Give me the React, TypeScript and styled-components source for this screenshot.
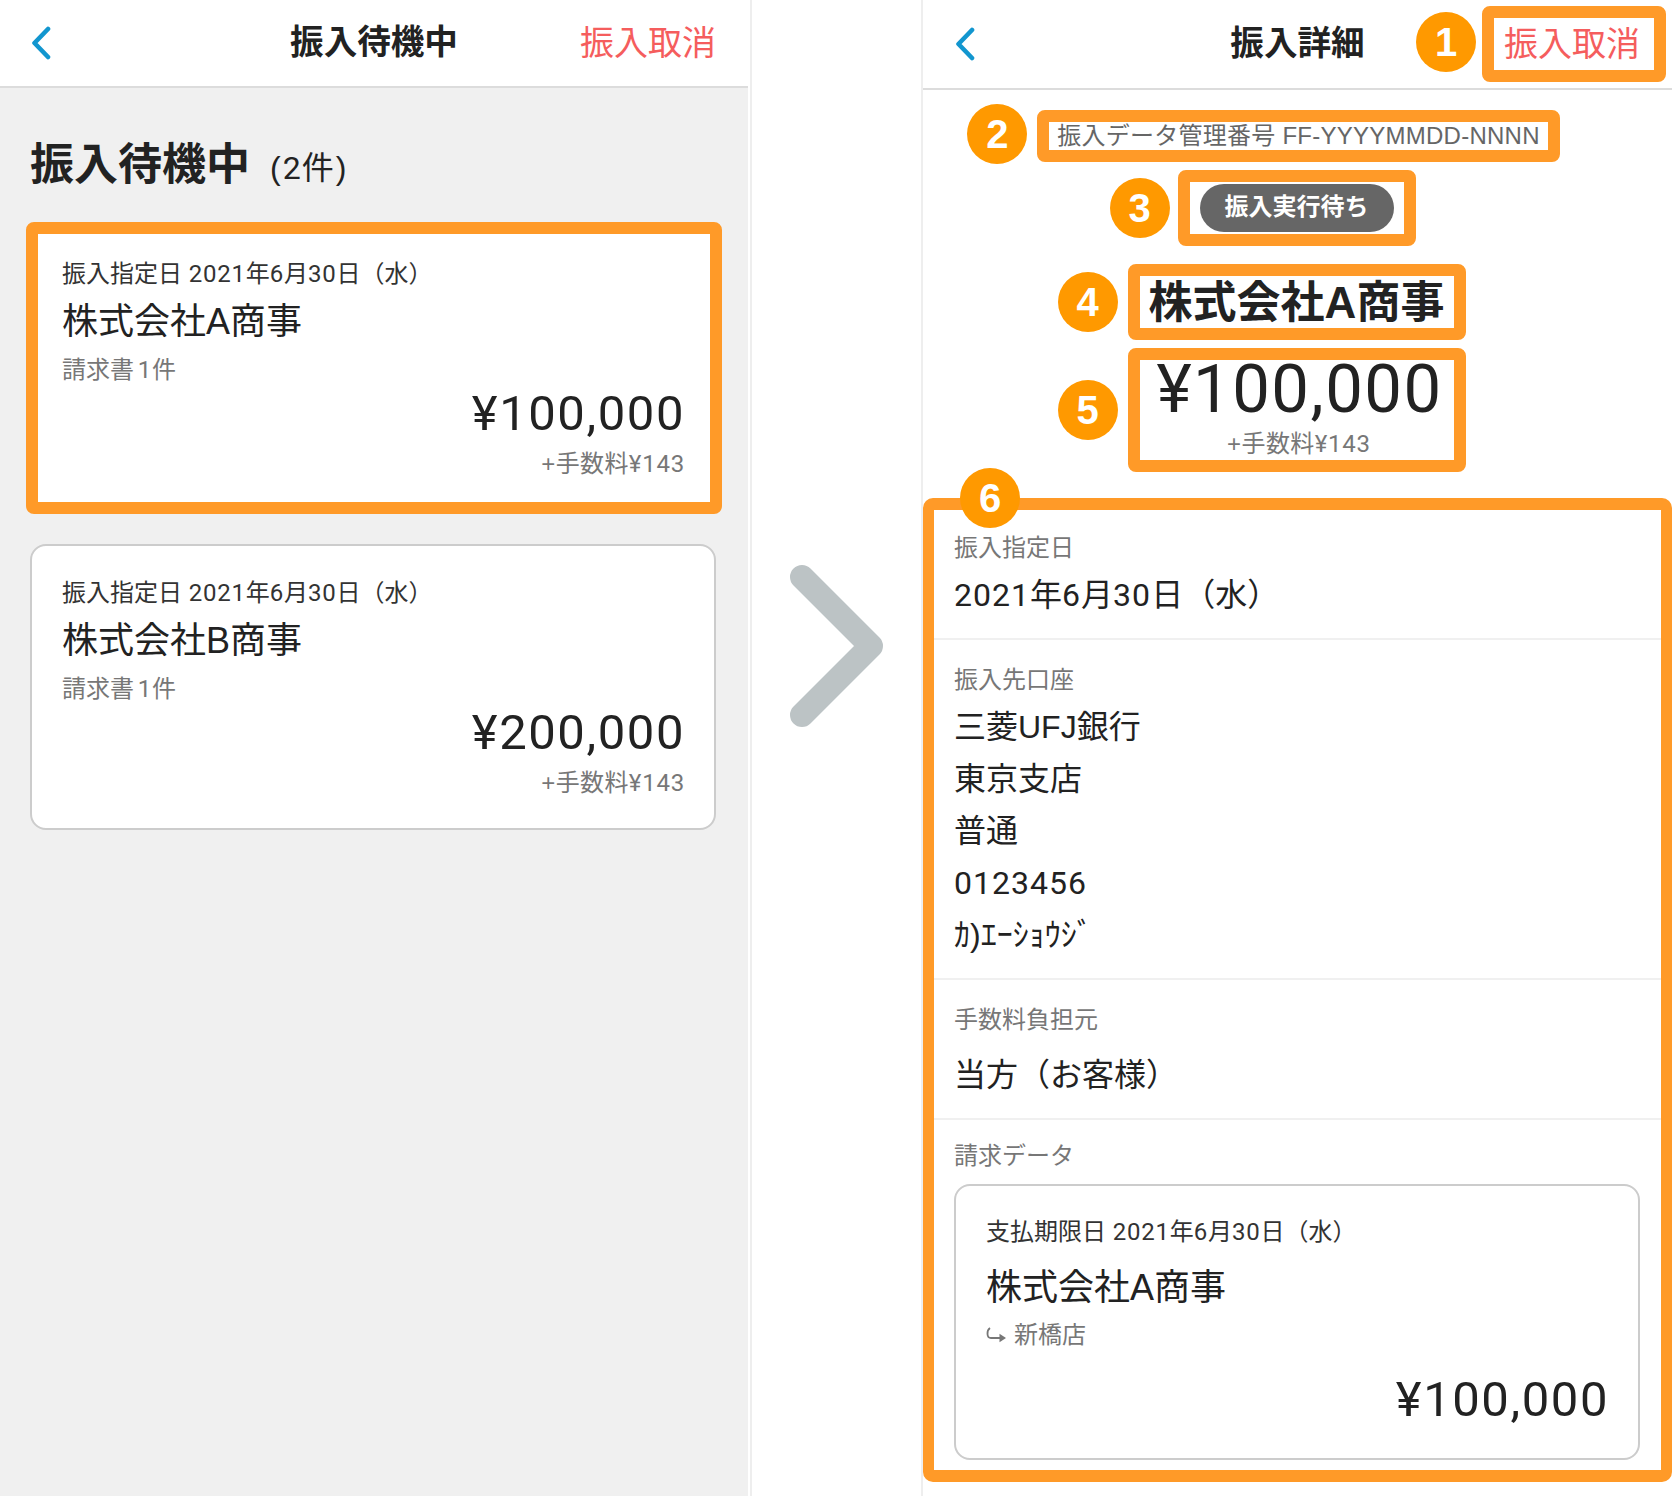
import React from 'react';
import styled, { createGlobalStyle } from 'styled-components';

const ORANGE = '#ff9a28';

const GlobalStyle = createGlobalStyle`
  html, body {
    margin: 0;
    padding: 0;
    background: #fff;
  }
  body {
    font-family: 'Liberation Sans', 'Noto Sans CJK JP', sans-serif;
    color: #222;
  }
  * {
    box-sizing: border-box;
  }
`;

const Page = styled.div`
  display: flex;
  width: 1672px;
  height: 1496px;
  overflow: hidden;
  background: #fff;
`;

const LeftPanel = styled.section`
  width: 748px;
  flex: none;
  margin-right: 2px;
  background: #f0f0f0;
`;

const Gutter = styled.div`
  width: 173px;
  flex: none;
  padding: 565px 0 0 38px;
  border-left: 2px solid #eeeeee;
  border-right: 2px solid #eeeeee;
`;

const RightPanel = styled.section`
  flex: 1;
  min-width: 0;
  background: #fff;
`;

const Header = styled.header<{ $height: number }>`
  display: grid;
  grid-template-columns: 1fr auto 1fr;
  align-items: center;
  height: ${props => props.$height}px;
  background: #fff;
  border-bottom: 2px solid #dcdcdc;
`;

const BackButton = styled.div<{ $left: number }>`
  display: flex;
  padding-left: ${props => props.$left}px;
`;

const HeaderTitle = styled.h1`
  margin: 0;
  font-size: 33.6px;
  line-height: 44px;
  font-weight: 700;
  color: #222;
`;

const CancelText = styled.div`
  font-size: 34px;
  line-height: 44px;
  color: #f55d5d;
  white-space: nowrap;
`;

const HeaderRight = styled.div<{ $right: number }>`
  display: flex;
  justify-content: flex-end;
  padding-right: ${props => props.$right}px;
`;

const ListBody = styled.div`
  padding: 47px 32px 0 30px;
`;

const ListHeading = styled.div`
  display: flex;
  align-items: baseline;
  gap: 20px;
  height: 90px;
`;

const HeadingText = styled.h2`
  margin: 0;
  font-size: 44px;
  line-height: 60px;
  font-weight: 700;
`;

const HeadingCount = styled.span`
  position: relative;
  top: -1px;
  font-size: 32px;
  line-height: 60px;
  letter-spacing: 2px;
`;

const CardList = styled.div`
  display: flex;
  flex-direction: column;
  gap: 32.5px;
`;

const Card = styled.article<{ $selected?: boolean; $height: number; $top: number }>`
  position: relative;
  height: ${props => props.$height}px;
  padding: ${props => props.$top}px 29px 0 30px;
  background: #fff;
  border: 2px solid #cccccc;
  border-radius: 16px;

  ${props => props.$selected && `
    &::after {
      content: '';
      position: absolute;
      top: -5px;
      left: -6px;
      right: -8px;
      bottom: -5px;
      border: 12px solid ${ORANGE};
      border-radius: 8px;
    }
  `}
`;

const CardDate = styled.div`
  font-size: 24px;
  line-height: 32px;
  color: #333;
`;

const CardName = styled.div<{ $gap: number }>`
  margin-top: ${props => props.$gap}px;
  font-size: 36px;
  line-height: 44px;
  color: #222;
`;

const CardSub = styled.div<{ $gap: number }>`
  display: flex;
  align-items: center;
  gap: 8px;
  margin-top: ${props => props.$gap}px;
  font-size: 24px;
  line-height: 32px;
  word-spacing: -3px;
  color: #777;
`;

const Num = styled.span`
  font-family: 'Roboto', 'Liberation Sans', sans-serif;
  letter-spacing: 0.032em;
`;

const CardAmount = styled.div<{ $gap: number }>`
  margin-top: ${props => props.$gap}px;
  font-size: 49px;
  line-height: 60px;
  text-align: right;
  color: #222;
`;

const CardFee = styled.div`
  margin-top: 4px;
  font-size: 24px;
  line-height: 32px;
  letter-spacing: 0.4px;
  text-align: right;
  color: #777;
`;

const SummaryColumn = styled.div`
  display: flex;
  flex-direction: column;
  align-items: center;
  padding: 20px 2px 0 0;
`;

const Highlight = styled.div<{ $gap?: number; $width?: number; $shift?: number }>`
  position: relative;
  margin-top: ${props => props.$gap ?? 0}px;
  margin-left: ${props => props.$shift ?? 0}px;
  width: ${props => (props.$width ? `${props.$width}px` : 'auto')};
  border: 12px solid ${ORANGE};
  border-radius: 8px;
  background: #fff;
  text-align: center;
`;

const Badge = styled.span<{ $offset?: number; $lift?: number }>`
  position: absolute;
  right: calc(100% + ${props => props.$offset ?? 22}px);
  top: calc(50% - ${props => props.$lift ?? 0}px);
  display: flex;
  align-items: center;
  justify-content: center;
  width: 60px;
  height: 60px;
  transform: translateY(-50%);
  border-radius: 50%;
  background: #ff9900;
  color: #fff;
  font-size: 40px;
  font-weight: 700;
  line-height: 1;
`;

const SectionBadge = styled(Badge)`
  right: auto;
  left: 26px;
  top: -42px;
  transform: none;
`;

const CancelHighlight = styled(Highlight)`
  padding: 0 14px 0 10px;
  height: 76px;
  display: flex;
  align-items: center;
`;

const ManageNumber = styled.div`
  padding: 0 8px;
  font-size: 24px;
  line-height: 28px;
  letter-spacing: 0.25px;
  color: #666;
  white-space: nowrap;
`;

const StatusPill = styled.div`
  margin: 2px 10px;
  padding: 0 25px;
  height: 48px;
  border-radius: 24px;
  background: #666;
  color: #fff;
  font-size: 24px;
  line-height: 46px;
  font-weight: 700;
  white-space: nowrap;
`;

const CompanyName = styled.div`
  padding-top: 1px;
  font-size: 44px;
  line-height: 51px;
  font-weight: 700;
  white-space: nowrap;
`;

const BigAmount = styled.div`
  font-size: 67px;
  line-height: 54px;
  padding: 2px 0 0 6px;

  ${Num} {
    letter-spacing: 0.022em;
  }
`;

const BigFee = styled.div`
  margin-top: 12px;
  padding-left: 5px;
  font-size: 24px;
  line-height: 31px;
  letter-spacing: 0.4px;
  color: #777;
`;

const DetailBox = styled.div`
  position: relative;
  margin-top: 26px;
  height: 984px;
  border-style: solid;
  border-color: ${ORANGE};
  border-width: 12px 11px;
  border-radius: 10px;
`;

const DetailRow = styled.div<{ $top: number; $bottom?: number }>`
  padding: ${props => props.$top}px 21px ${props => props.$bottom ?? 17}px 20px;
  border-bottom: 2px solid #f0f0f0;

  &:last-child {
    border-bottom: none;
  }
`;

const DetailLabel = styled.div`
  font-size: 24px;
  line-height: 32px;
  color: #777;
`;

const DetailValue = styled.div<{ $gap?: number }>`
  margin-top: ${props => props.$gap ?? 0}px;
  font-size: 32px;
  line-height: 52px;
  color: #222;
`;

const ValueList = styled.div`
  margin-top: 5px;
`;

const InvoiceCard = styled(Card)`
  margin-top: 12px;
`;

const BackIcon = () => (
  <svg width="20" height="34" viewBox="0 0 20 34" fill="none">
    <path d="M17 3 L3.5 17 L17 31" stroke="#1296cf" strokeWidth="4.6" strokeLinecap="round" strokeLinejoin="round" />
  </svg>
);

const BigChevron = () => (
  <svg width="94" height="162" viewBox="0 0 94 162" fill="none">
    <path d="M12 12 L81 81 L12 150" stroke="#bcc3c5" strokeWidth="24" strokeLinecap="round" strokeLinejoin="round" />
  </svg>
);

const BranchIcon = () => (
  <svg width="20" height="16" viewBox="0 0 20 16" fill="none">
    <path d="M4 1 C0.5 3.5 0.5 11 5 11 H14" stroke="#777" strokeWidth="1.8" />
    <polygon points="13.5,6.8 20,11 13.5,15.2" fill="#777" />
  </svg>
);

// digits in the reference run wider than the Latin letters, so they get their own span
const withNums = (text: string) =>
  text.split(/([¥0-9,]+)/).map((part, i) => (i % 2 === 1 ? <Num key={i}>{part}</Num> : part));

const pendingList = [
  { name: '株式会社A商事', amount: '¥100,000', selected: true },
  { name: '株式会社B商事', amount: '¥200,000', selected: false },
];

const bankLines = ['三菱UFJ銀行', '東京支店', '普通', '0123456', 'ｶ)ｴｰｼｮｳｼﾞ'];

const App: React.FC = () => {
  return (
    <Page>
      <GlobalStyle />
      <LeftPanel>
        <Header $height={88}>
          <BackButton $left={31}>
            <BackIcon />
          </BackButton>
          <HeaderTitle>振入待機中</HeaderTitle>
          <HeaderRight $right={32}>
            <CancelText>振入取消</CancelText>
          </HeaderRight>
        </Header>
        <ListBody>
          <ListHeading>
            <HeadingText>振入待機中</HeadingText>
            <HeadingCount>{withNums('(2件)')}</HeadingCount>
          </ListHeading>
          <CardList>
            {pendingList.map(item => (
              <Card key={item.name} $selected={item.selected} $height={286} $top={31}>
                <CardDate>{withNums('振入指定日 2021年6月30日（水）')}</CardDate>
                <CardName $gap={10}>{item.name}</CardName>
                <CardSub $gap={10}>
                  <span>{withNums('請求書 1件')}</span>
                </CardSub>
                <CardAmount $gap={-3}>{withNums(item.amount)}</CardAmount>
                <CardFee>{withNums('+手数料¥143')}</CardFee>
              </Card>
            ))}
          </CardList>
        </ListBody>
      </LeftPanel>

      <Gutter>
        <BigChevron />
      </Gutter>

      <RightPanel>
        <Header $height={90}>
          <BackButton $left={32}>
            <BackIcon />
          </BackButton>
          <HeaderTitle>振入詳細</HeaderTitle>
          <HeaderRight $right={6}>
            <CancelHighlight>
              <Badge $offset={18} $lift={2}>1</Badge>
              <CancelText>振入取消</CancelText>
            </CancelHighlight>
          </HeaderRight>
        </Header>

        <SummaryColumn>
          <Highlight $shift={4}>
            <Badge $lift={2}>2</Badge>
            <ManageNumber>振入データ管理番号 FF-YYYYMMDD-NNNN</ManageNumber>
          </Highlight>
          <Highlight $gap={8}>
            <Badge $offset={20}>3</Badge>
            <StatusPill>振入実行待ち</StatusPill>
          </Highlight>
          <Highlight $gap={18} $width={338}>
            <Badge>4</Badge>
            <CompanyName>株式会社A商事</CompanyName>
          </Highlight>
          <Highlight $gap={8} $width={338}>
            <Badge>5</Badge>
            <BigAmount>{withNums('¥100,000')}</BigAmount>
            <BigFee>{withNums('+手数料¥143')}</BigFee>
          </Highlight>
        </SummaryColumn>

        <DetailBox>
          <SectionBadge>6</SectionBadge>
          <DetailRow $top={22}>
            <DetailLabel>振入指定日</DetailLabel>
            <DetailValue $gap={5}>{withNums('2021年6月30日（水）')}</DetailValue>
          </DetailRow>
          <DetailRow $top={24}>
            <DetailLabel>振入先口座</DetailLabel>
            <ValueList>
              {bankLines.map(line => (
                <DetailValue key={line}>{withNums(line)}</DetailValue>
              ))}
            </ValueList>
          </DetailRow>
          <DetailRow $top={24}>
            <DetailLabel>手数料負担元</DetailLabel>
            <DetailValue $gap={13}>当方（お客様）</DetailValue>
          </DetailRow>
          <DetailRow $top={20} $bottom={0}>
            <DetailLabel>請求データ</DetailLabel>
            <InvoiceCard $height={276} $top={30}>
              <CardDate>{withNums('支払期限日 2021年6月30日（水）')}</CardDate>
              <CardName $gap={18}>株式会社A商事</CardName>
              <CardSub $gap={9}>
                <BranchIcon />
                <span>新橋店</span>
              </CardSub>
              <CardAmount $gap={18}>{withNums('¥100,000')}</CardAmount>
            </InvoiceCard>
          </DetailRow>
        </DetailBox>
      </RightPanel>
    </Page>
  );
};

export default App;
